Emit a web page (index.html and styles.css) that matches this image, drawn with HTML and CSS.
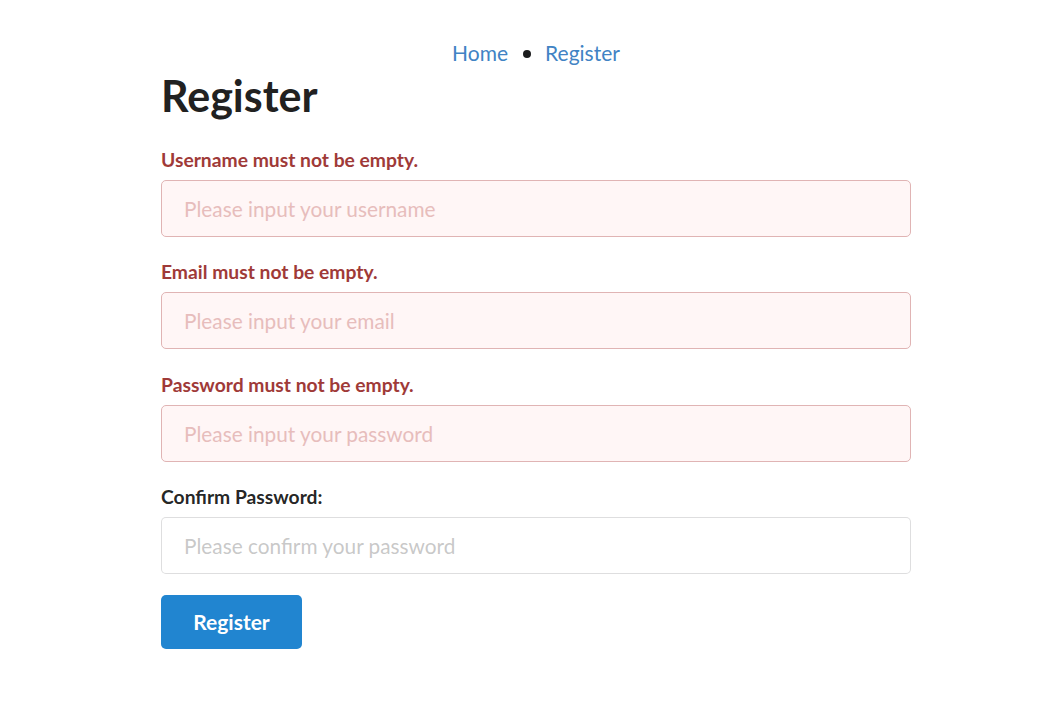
FILE: index.html
```html
<!DOCTYPE html>
<html lang="en">
<head>
<meta charset="utf-8">
<title>Register</title>
<link rel="stylesheet" href="styles.css">
</head>
<body>
<div class="page">
  <nav class="breadcrumb">
    <a class="crumb" href="#">Home</a>
    <span class="dot"></span>
    <a class="crumb" href="#">Register</a>
  </nav>
  <h1 class="title">Register</h1>
  <form class="form">
    <div class="field error">
      <label class="label">Username must not be empty.</label>
      <input class="input" type="text" placeholder="Please input your username">
    </div>
    <div class="field error">
      <label class="label">Email must not be empty.</label>
      <input class="input" type="text" placeholder="Please input your email">
    </div>
    <div class="field error">
      <label class="label">Password must not be empty.</label>
      <input class="input" type="password" placeholder="Please input your password">
    </div>
    <div class="field">
      <label class="label">Confirm Password:</label>
      <input class="input" type="password" placeholder="Please confirm your password">
    </div>
    <button class="button" type="button">Register</button>
  </form>
</div>
</body>
</html>
```
FILE: styles.css
```css
* { box-sizing: border-box; }
body {
  margin: 0;
  background: #fff;
  font-family: Lato, "Open Sans", "Liberation Sans", sans-serif;
  color: rgba(0,0,0,.87);
}
.page {
  width: 750px;
  margin-left: 161px;
  padding-top: 38px;
}
.breadcrumb {
  display: flex;
  justify-content: center;
  align-items: center;
  font-size: 21px;
  line-height: 30px;
}
.crumb {
  color: #4183c4;
  text-decoration: none;
}
.dot {
  width: 8px;
  height: 8px;
  border-radius: 50%;
  background: #1b1c1d;
  margin: 1px 14px 0 15px;
}
.title {
  margin: 2px 0 0;
  font-size: 43px;
  font-weight: 700;
  line-height: 52px;
  color: #212121;
}
.form {
  margin-top: 24px;
  display: flex;
  flex-direction: column;
}
.field {
  display: flex;
  flex-direction: column;
  margin-bottom: 21px;
}
.field + .field { margin-top: 0.3px; }
.label {
  font-size: 19.3px;
  font-weight: 700;
  line-height: 28px;
  margin-bottom: 6px;
  color: rgba(0,0,0,.87);
}
.input {
  height: 57px;
  padding: 0 22px;
  font-family: inherit;
  font-size: 20.8px;
  border: 1px solid rgba(34,36,38,.15);
  border-radius: 5px;
  background: #fff;
  color: rgba(0,0,0,.87);
  outline: none;
}
.input::placeholder { color: rgba(191,191,191,.87); }
.field.error .label { color: #9f3a38; }
.field.error .input {
  background: #fff6f6;
  border-color: #e0b4b4;
  color: #9f3a38;
}
.field.error .input::placeholder { color: #e7bdbc; }
.button {
  align-self: flex-start;
  width: 141px;
  height: 54px;
  border: none;
  border-radius: 5px;
  background: #2185d0;
  color: #fff;
  font-family: inherit;
  font-size: 21px;
  font-weight: 700;
}
```
